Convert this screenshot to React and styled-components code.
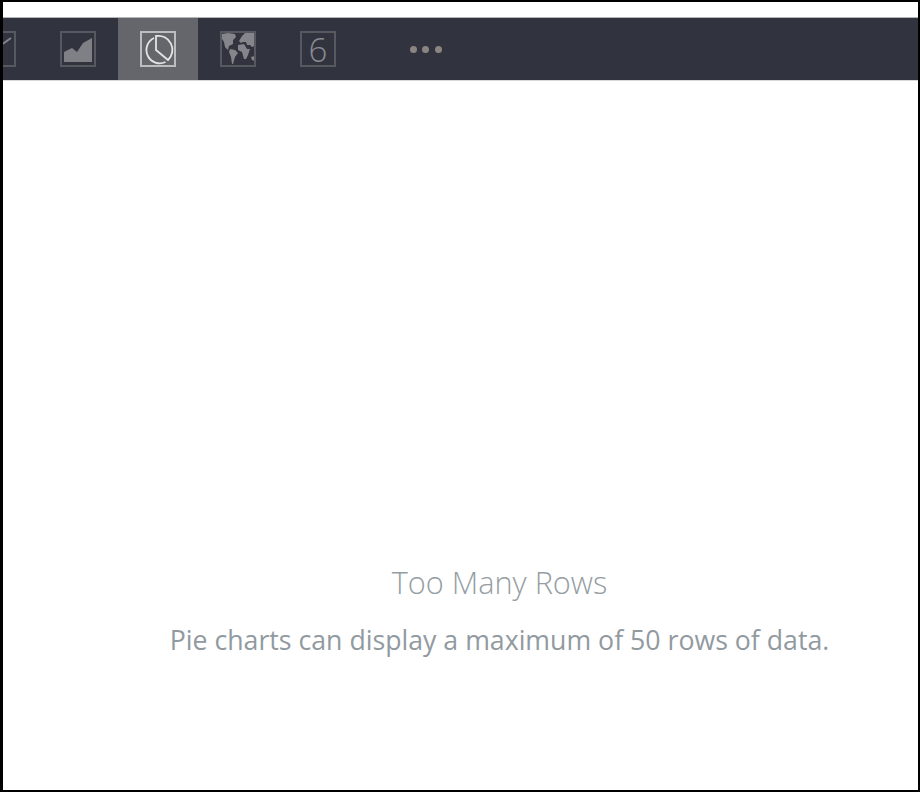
import React from 'react';
import styled, { createGlobalStyle } from 'styled-components';

const GlobalStyle = createGlobalStyle`
  html, body {
    margin: 0;
    padding: 0;
    background: #fff;
  }
`;

const Frame = styled.div`
  box-sizing: border-box;
  width: 920px;
  height: 792px;
  display: flex;
  flex-direction: column;
  padding-top: 15px;
  background: #fff;
  border-style: solid;
  border-color: #000;
  border-width: 2px 2px 2px 3px;
  font-family: 'Open Sans', sans-serif;
  overflow: hidden;
`;

const Toolbar = styled.div`
  flex: none;
  height: 64px;
  display: flex;
  background: #31343e;
  border-top: 1px solid #b4b5b8;
  border-bottom: 1px solid #d8d8da;
  box-sizing: border-box;
  overflow: hidden;
`;

const ToolItem = styled.div`
  flex: none;
  width: 80px;
  display: flex;
  align-items: center;
  justify-content: center;
  background: ${({ $active }) => ($active ? '#65666c' : 'transparent')};
  &:first-child {
    margin-left: -45px;
  }
`;

const IconBox = styled.div`
  box-sizing: border-box;
  width: 36px;
  height: 36px;
  display: flex;
  align-items: center;
  justify-content: center;
  border: 2px solid ${({ $active }) => ($active ? '#bdbdc0' : '#575961')};
  color: #8b8c92;
  font-size: 33px;
  font-weight: 300;
  line-height: 1;
`;

const Dots = styled.div`
  display: flex;
  gap: 5.5px;
  margin-left: 55px;
  align-items: center;
`;

const Dot = styled.span`
  width: 7px;
  height: 7px;
  border-radius: 50%;
  background: #8a8583;
`;

const Message = styled.div`
  flex: 1;
  display: flex;
  flex-direction: column;
  align-items: center;
  padding: 482px 0 0 78px;
`;

const Title = styled.div`
  font-size: 30.7px;
  font-weight: 300;
  line-height: 38px;
  color: #959ea3;
`;

const Body = styled.div`
  margin-top: 22px;
  font-size: 26.7px;
  font-weight: 400;
  line-height: 33px;
  color: #919a9f;
  white-space: nowrap;
`;

const Glyph = styled.svg`
  width: 32px;
  height: 32px;
  display: block;
`;

const LineIcon = () => (
  <Glyph viewBox="1 1 32 32">
    <path d="M14 17 L23 11 L30 6" fill="none" stroke="#85868c" strokeWidth="2" />
  </Glyph>
);

const AreaIcon = () => (
  <Glyph viewBox="1 1 32 32">
    <path d="M3 30 V20 L11 16 L16 20 L22 11 L31 6 V30 Z" fill="#7f8086" />
  </Glyph>
);

const PieIcon = () => (
  <Glyph viewBox="1 1 32 32">
    <path
      d="M15 4 A14 14 0 0 1 27 28 L15 18 Z"
      fill="none"
      stroke="#e4e4e6"
      strokeWidth="1.8"
    />
    <path
      d="M13 6 A12.5 12.5 0 1 0 24.5 30"
      fill="none"
      stroke="#e4e4e6"
      strokeWidth="1.8"
    />
  </Glyph>
);

const WorldIcon = () => (
  <Glyph viewBox="1 1 32 32">
    <path d="M1 2 L7 1 L14 2 L15 5 L12 8 L12 12 L8 14 L7 18 L4 15 L3 10 L1 7 Z" fill="#85868c" />
    <path d="M9 17 L14 18 L17 21 L14 25 L12 32 L11 32 L10 25 L8 20 Z" fill="#85868c" />
    <path d="M18 9 L21 4 L24 1 L34 1 L34 14 L31 15 L29 13 L26 13 L25 10 L22 10 L20 11 Z" fill="#85868c" />
    <path d="M17 13 L23 12 L26 17 L29 17 L27 23 L25 27 L23 27 L21 20 L17 18 Z" fill="#85868c" />
    <path d="M30 25 L34 24 L34 29 L31 28 Z" fill="#85868c" />
  </Glyph>
);

const App = () => (
  <>
    <GlobalStyle />
    <Frame>
      <Toolbar>
        <ToolItem>
          <IconBox>
            <LineIcon />
          </IconBox>
        </ToolItem>
        <ToolItem>
          <IconBox>
            <AreaIcon />
          </IconBox>
        </ToolItem>
        <ToolItem $active>
          <IconBox $active>
            <PieIcon />
          </IconBox>
        </ToolItem>
        <ToolItem>
          <IconBox>
            <WorldIcon />
          </IconBox>
        </ToolItem>
        <ToolItem>
          <IconBox>6</IconBox>
        </ToolItem>
        <ToolItem>
          <Dots>
            <Dot />
            <Dot />
            <Dot />
          </Dots>
        </ToolItem>
      </Toolbar>
      <Message>
        <Title>Too Many Rows</Title>
        <Body>Pie charts can display a maximum of 50 rows of data.</Body>
      </Message>
    </Frame>
  </>
);

export default App;
